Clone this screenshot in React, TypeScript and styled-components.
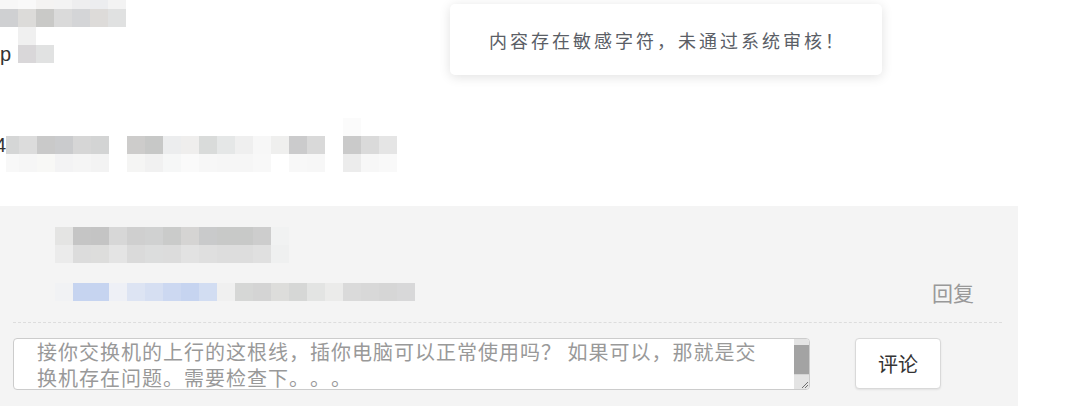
import React from 'react'
import styled, { createGlobalStyle } from 'styled-components'

const GlobalStyle = createGlobalStyle`
  html, body {
    margin: 0;
    padding: 0;
    background: #ffffff;
    overflow: hidden;
  }
  body {
    font-family: 'Liberation Sans', 'Noto Sans CJK SC', sans-serif;
    color: #333333;
    text-spacing-trim: space-all;
  }
`

const Page = styled.div`
  width: 1071px;
  height: 413px;
  position: relative;
  overflow: hidden;
`

// 打码区域：像素块
const MosaicBlock = styled.div`
  display: flex;
  flex-direction: column;
`

const MosaicRow = styled.div<{ $indent?: number; $h?: number }>`
  display: flex;
  align-items: flex-start;
  height: ${(p) => p.$h ?? 18}px;
  padding-left: ${(p) => p.$indent ?? 0}px;
`

const Tile = styled.span<{ $c: string; $w?: number; $h?: number }>`
  display: block;
  flex: none;
  width: ${(p) => p.$w ?? 18}px;
  height: ${(p) => p.$h ?? 18}px;
  background: ${(p) => p.$c};
`

const Glyph = styled.span<{ $w: number; $shift?: number }>`
  display: block;
  flex: none;
  width: ${(p) => p.$w}px;
  margin-left: ${(p) => p.$shift ?? 0}px;
  font-size: 20px;
  line-height: 18px;
  color: #333333;
`

const TopArea = styled.div`
  display: flex;
  flex-direction: column;
  height: 206px;
`

const Gap = styled.div<{ $h: number }>`
  height: ${(p) => p.$h}px;
`

const CommentPanel = styled.section`
  width: 1018px;
  box-sizing: border-box;
  background: #f4f4f4;
  padding: 21px 16px 15px 13px;
  height: 200px;
`

const ReplyBody = styled.div`
  padding-left: 42px;
`

const MetaRow = styled.div`
  display: flex;
  align-items: center;
  margin-top: 20px;
  height: 18px;
`

const ReplyLink = styled.a`
  margin-left: auto;
  margin-right: 28px;
  font-family: 'Noto Sans CJK SC', sans-serif;
  font-size: 21px;
  line-height: 21px;
  color: #999999;
  cursor: pointer;
`

const Divider = styled.div`
  margin-top: 21px;
  border-top: 1px dashed #dddddd;
`

const CommentForm = styled.div`
  display: flex;
  align-items: flex-start;
  margin-top: 15px;
`

const InputFrame = styled.div`
  display: flex;
  box-sizing: border-box;
  width: 797px;
  height: 52px;
  border: 1px solid #cccccc;
  border-radius: 4px;
  background: #ffffff;
  overflow: hidden;
`

const CommentInput = styled.textarea`
  flex: 1;
  box-sizing: border-box;
  height: 100%;
  margin: 0;
  padding: 0 24px 0 23px;
  border: none;
  background: transparent;
  font-family: 'Noto Sans CJK SC', sans-serif;
  font-size: 20px;
  line-height: 26px;
  letter-spacing: 1px;
  color: #999999;
  outline: none;
  resize: none;
  overflow: hidden;
`

const ScrollTrack = styled.div`
  display: flex;
  flex-direction: column;
  width: 15px;
  flex: none;
  background: #e4e4e4;
`

const ScrollThumb = styled.div`
  margin-top: 6px;
  height: 29px;
  background: #a3a3a3;
`

const ResizeGrip = styled.div`
  margin-top: auto;
  height: 14px;
  border-top: 1px solid #d4d4d4;
  display: flex;
  align-items: flex-end;
  justify-content: flex-end;
`

const SubmitButton = styled.button`
  box-sizing: border-box;
  width: 86px;
  height: 51px;
  margin-left: 45px;
  border: 1px solid #d9d9d9;
  border-radius: 4px;
  background: #ffffff;
  box-shadow: 0 1px 2px rgba(0, 0, 0, 0.08);
  font-family: 'Noto Sans CJK SC', sans-serif;
  font-size: 20px;
  color: #333333;
  cursor: pointer;
`

const Toast = styled.div`
  position: absolute;
  top: 4px;
  left: 450px;
  width: 432px;
  height: 71px;
  box-sizing: border-box;
  display: flex;
  align-items: center;
  justify-content: center;
  padding-left: 3px;
  background: #ffffff;
  border-radius: 5px;
  box-shadow: 0 2px 12px rgba(0, 0, 0, 0.12);
  font-family: 'Noto Sans CJK SC', sans-serif;
  font-size: 18px;
  letter-spacing: 3px;
  color: #5a5e66;
`

const headRowA = ['#f7f7f7', '#f9f9f9', '#f4f3f2', '#f3f3f3', '#eeeeef', '#ecedef', '#f3f3f3']
const headRowB = ['#cfd0d2', '#dcdbd9', '#c9c9c7', '#dadada', '#d4d5d7', '#dddbd9', '#e0e1e1']

const infoTop = [
  ['#d5d6d6', '#dcdcdc', '#c9c9c9', '#cacbcd', '#d6d6d6', '#d3d4d4'],
  ['#cdcccb', '#c7c8c7', '#ecedee', '#efeeed', '#d9dbda', '#e5e7e7', '#efefef', '#f7f7f7', '#efefee', '#cbcbcc', '#d9d9d9'],
  ['#cacaca', '#dadada', '#e5e5e5'],
]
const infoBottom = [
  ['#f8f8f8', '#f6f6f6', '#f8f8f6', '#f3f3f4', '#f5f5f5', '#f3f3f3'],
  ['#f5f5f4', '#f1f1f1', '#f6f7f7', '#fafafa', '#f7f7f7', '#f6f6f6', '#f6f6f6', '#f8f8f8', '#ffffff', '#f8f8f8', '#f7f7f7'],
  ['#ececec', '#f7f7f7', '#f9f9f9'],
]

const userRowA = ['#e4e4e3', '#c5c5c5', '#c4c4c4', '#d7d7d7', '#cfcfcf', '#d0d1d1', '#cacbca', '#d5d4d3', '#c9cacb', '#c8c9c8', '#c8c9c8', '#cdcdcd', '#f1f2f2']
const userRowB = ['#ebebeb', '#dcdcdc', '#dddddc', '#e4e4e4', '#dadada', '#dcdddd', '#dcdcdc', '#e2e2e2', '#dfdfdf', '#dddddd', '#dddddd', '#e0e0e0', '#eff0f0']
const metaRow = ['#f1f2f4', '#c6d4f0', '#c6d4f0', '#eef0f6', '#dde4f3', '#d6dff2', '#ccd8f1', '#c6d4f0', '#d2ddf2', '#f0f0f0', '#d6d7d6', '#d4d4d4', '#dddddb', '#d6d7d6', '#e3e4e3', '#ebebea', '#dadada', '#d8d8d8', '#d6d6d6', '#d8d8d9']

const commentText = '接你交换机的上行的这根线，插你电脑可以正常使用吗？ 如果可以，那就是交换机存在问题。需要检查下。。。'

// 一组像素块，首块可以窄一些（被裁掉的部分）
const renderGroup = (colors: string[], firstWidth?: number) =>
  colors.map((c, i) => <Tile key={i} $c={c} $w={i === 0 && firstWidth ? firstWidth : 18} />)

const App: React.FC = () => {
  return (
    <Page>
      <GlobalStyle />
      <TopArea>
        <MosaicBlock>
          <MosaicRow $h={9}>
            {headRowA.map((c, i) => (
              <Tile key={i} $c={c} $h={9} />
            ))}
          </MosaicRow>
          <MosaicRow>{renderGroup(headRowB)}</MosaicRow>
          <MosaicRow $indent={18}>
            <Tile $c="#f0f0f0" />
          </MosaicRow>
          <MosaicRow>
            <Glyph $w={18}>p</Glyph>
            <Tile $c="#d9d7d9" />
            <Tile $c="#e1e2e2" />
          </MosaicRow>
        </MosaicBlock>
        <Gap $h={55} />
        <MosaicBlock>
          <MosaicRow $indent={343}>
            <Tile $c="#fbfbfb" />
          </MosaicRow>
          <MosaicRow>
            <Glyph $w={11} $shift={-5}>4</Glyph>
            {renderGroup(infoTop[0], 13)}
            <Tile $c="transparent" />
            {renderGroup(infoTop[1])}
            <Tile $c="transparent" />
            {renderGroup(infoTop[2])}
          </MosaicRow>
          <MosaicRow $indent={6}>
            {renderGroup(infoBottom[0], 13)}
            <Tile $c="transparent" />
            {renderGroup(infoBottom[1])}
            <Tile $c="transparent" />
            {renderGroup(infoBottom[2])}
          </MosaicRow>
        </MosaicBlock>
      </TopArea>

      <CommentPanel>
        <ReplyBody>
          <MosaicBlock>
            <MosaicRow>{renderGroup(userRowA)}</MosaicRow>
            <MosaicRow>{renderGroup(userRowB)}</MosaicRow>
          </MosaicBlock>
          <MetaRow>
            {renderGroup(metaRow)}
            <ReplyLink>回复</ReplyLink>
          </MetaRow>
        </ReplyBody>
        <Divider />
        <CommentForm>
          <InputFrame>
            <CommentInput defaultValue={commentText} />
            <ScrollTrack>
              <ScrollThumb />
              <ResizeGrip>
                <svg width="9" height="9" viewBox="0 0 9 9">
                  <path d="M8 2 L2 8 M8 5 L5 8" stroke="#6f6f6f" strokeWidth="1" fill="none" />
                </svg>
              </ResizeGrip>
            </ScrollTrack>
          </InputFrame>
          <SubmitButton>评论</SubmitButton>
        </CommentForm>
      </CommentPanel>

      <Toast>内容存在敏感字符，未通过系统审核！</Toast>
    </Page>
  )
}

export default App
